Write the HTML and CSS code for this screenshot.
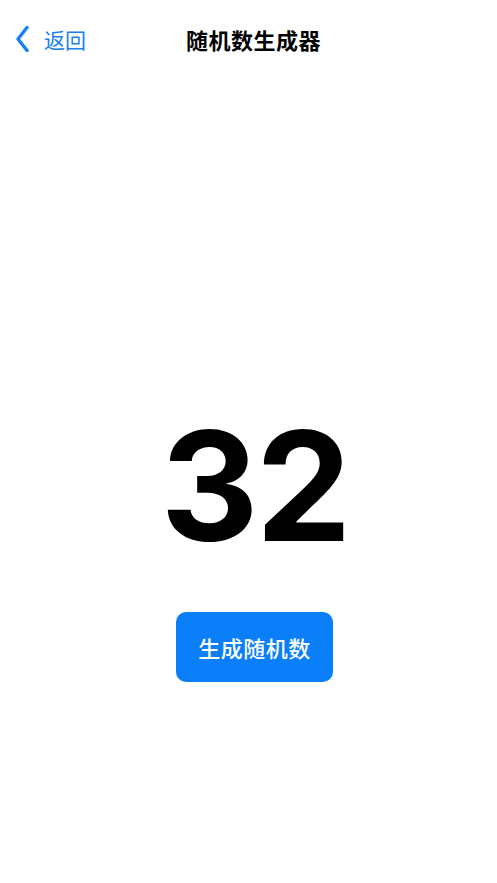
FILE: index.html
```html
<!DOCTYPE html>
<html lang="zh-CN">
  <head>
    <meta charset="UTF-8" />
    <meta name="viewport" content="width=device-width, initial-scale=1.0" />
    <title>随机数生成器</title>
    <link rel="stylesheet" href="styles.css">
  </head>
  <body>
    <header class="nav">
      <a class="back" href="#">
        <svg class="chevron" width="13" height="28" viewBox="0 0 13 28">
          <path d="M11 2.5 L2 14 L11 25.5" fill="none" stroke="currentColor" stroke-width="3.4" stroke-linecap="round" stroke-linejoin="round" />
        </svg>
        <span>返回</span>
      </a>
      <h1 class="title">随机数生成器</h1>
    </header>

    <main class="content">
      <div class="number" id="number">32</div>
      <button class="generate" id="generate">生成随机数</button>
    </main>

    <script>
      const number = document.querySelector("#number");
      document.querySelector("#generate").addEventListener("click", () => {
        number.textContent = Math.floor(Math.random() * 100) + 1;
      });
    </script>
  </body>
</html>
```

FILE: styles.css
```css
html,
body {
  margin: 0;
  padding: 0;
  background: #fff;
  font-family: Inter, "Noto Sans CJK SC", sans-serif;
}

.nav {
  position: relative;
  height: 78px;
  display: flex;
  align-items: center;
  justify-content: center;
}

.back {
  position: absolute;
  left: 16px;
  top: 0;
  height: 78px;
  display: flex;
  align-items: center;
  gap: 15px;
  color: #1a7ff0;
  text-decoration: none;
  font-size: 21px;
}

.chevron {
  display: block;
}

.title {
  margin: 0 0 0 10px;
  font-size: 22px;
  font-weight: 700;
  color: #000;
  letter-spacing: 0.5px;
}

.content {
  display: flex;
  flex-direction: column;
  align-items: center;
  padding-top: 332px;
  padding-left: 12px;
}

.number {
  font-size: 152px;
  font-weight: 700;
  line-height: 1;
  color: #000;
  letter-spacing: -3px;
}

.generate {
  margin-top: 50px;
  width: 157px;
  height: 70px;
  border: 0;
  border-radius: 10px;
  background: #0a7ff9;
  color: #fff;
  font-family: inherit;
  font-size: 22px;
  font-weight: 500;
  letter-spacing: 0.5px;
}
```
